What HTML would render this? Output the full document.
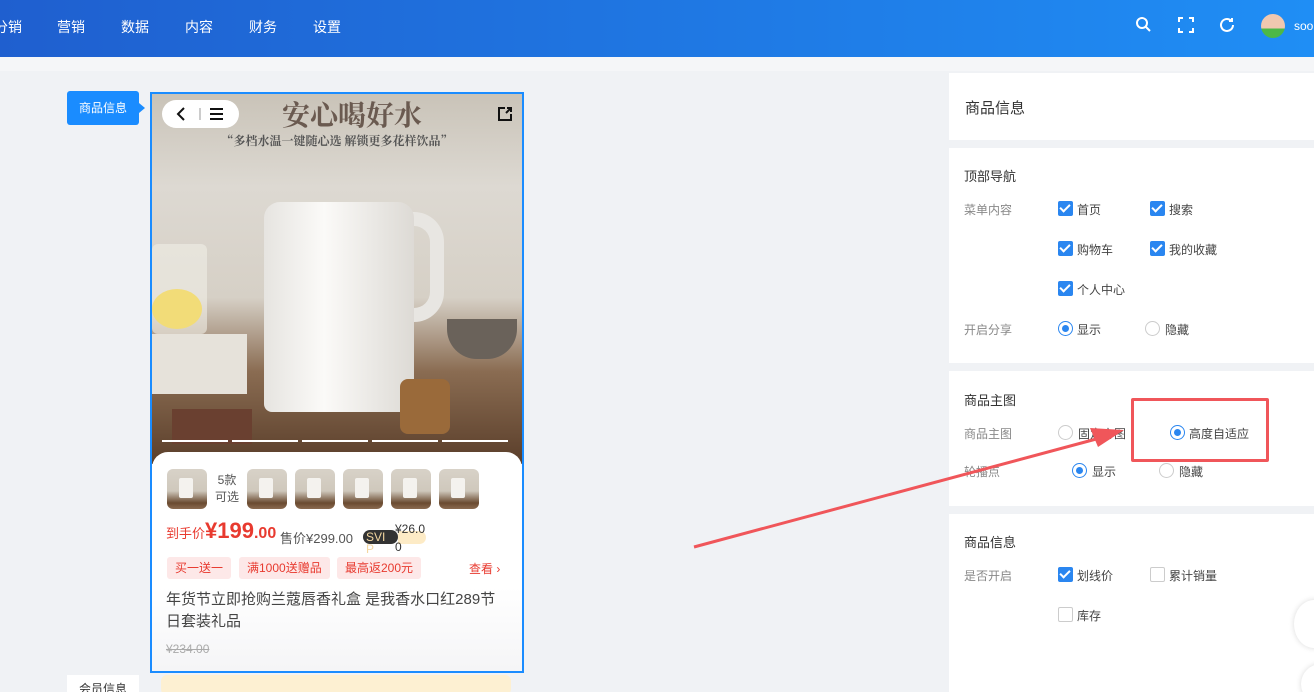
<!DOCTYPE html>
<html><head><meta charset="utf-8"><style>
*{margin:0;padding:0;box-sizing:border-box}
html,body{width:1314px;height:692px;overflow:hidden}
body{background:#f0f2f5;font-family:"Liberation Sans","Noto Sans CJK SC",sans-serif;position:relative;color:#333}
.hdr{position:absolute;left:0;top:0;width:1314px;height:57px;background:linear-gradient(90deg,#1f5fcf,#1f8ef5)}
.hdr span{position:absolute;top:17px;color:#fff;font-size:14px}
.sub{position:absolute;top:57px;left:0;width:1314px;height:14px;background:#f5f6f8}
.abs{position:absolute}
.sec{position:absolute;left:949px;width:365px;background:#fff}
.t{position:absolute;font-size:13px;color:#333}
.l{position:absolute;font-size:12px;color:#888}
.o{position:absolute;font-size:12px;color:#444}
.cb{position:absolute;width:15px;height:15px;border-radius:2px;background:#2a86f0}
.cb:after{content:"";position:absolute;left:4px;top:1px;width:4px;height:8px;border:solid #fff;border-width:0 2px 2px 0;transform:rotate(45deg)}
.cbe{position:absolute;width:15px;height:15px;border-radius:2px;border:1px solid #ccc;background:#fff}
.rd{position:absolute;width:15px;height:15px;border-radius:50%;border:1px solid #2a86f0;background:#fff}
.rd:after{content:"";position:absolute;left:3px;top:3px;width:7px;height:7px;border-radius:50%;background:#2a86f0}
.rde{position:absolute;width:15px;height:15px;border-radius:50%;border:1px solid #ccc;background:#fff}
.th{position:absolute;top:469px;width:40px;height:40px;border-radius:6px;background:linear-gradient(180deg,#d8d2c8 0,#cfc8bc 55%,#6a4a30 85%,#8a6a50 100%)}
.th:after{content:"";position:absolute;left:12px;top:9px;width:14px;height:20px;background:#f4f2ee;border-radius:2px}
.tag{position:absolute;top:557px;height:22px;background:#fde8e8;color:#e83a2f;font-size:12px;line-height:22px;padding:0 8px;border-radius:3px}
</style></head><body>
<div class="hdr">
<span style="left:-6px">分销</span><span style="left:57px">营销</span><span style="left:121px">数据</span><span style="left:185px">内容</span><span style="left:249px">财务</span><span style="left:313px">设置</span>
<svg class="abs" style="left:1135px;top:16px" width="18" height="18" viewBox="0 0 18 18" fill="none" stroke="#fff" stroke-width="2"><circle cx="7" cy="7" r="5"/><path d="M11 11l4 4"/></svg>
<svg class="abs" style="left:1177px;top:16px" width="18" height="18" viewBox="0 0 18 18" fill="none" stroke="#fff" stroke-width="2"><path d="M2 6V2h4M12 2h4v4M16 12v4h-4M6 16H2v-4"/></svg>
<svg class="abs" style="left:1218px;top:16px" width="18" height="18" viewBox="0 0 18 18" fill="none" stroke="#fff" stroke-width="2"><path d="M15 9a6 6 0 1 1-2-4.5M14 2v3h-3"/></svg>
<div class="abs" style="left:1261px;top:14px;width:24px;height:24px;border-radius:50%;background:linear-gradient(#f0c8b0 0,#f0c8b0 60%,#4cb848 60%)"></div>
<span style="left:1294px;font-size:12px;top:19px">soo</span>
</div>
<div class="sub"></div>

<div class="abs" style="left:67px;top:91px;width:72px;height:34px;background:#1a8cff;border-radius:3px;color:#fff;font-size:12px;line-height:34px;text-align:center">商品信息</div>
<div class="abs" style="left:139px;top:103px;border-left:6px solid #1a8cff;border-top:5px solid transparent;border-bottom:5px solid transparent"></div>

<div class="abs" style="left:150px;top:92px;width:374px;height:581px;border:2px solid #1a8cff;background:#f7f7f8;overflow:hidden">
 <div class="abs" style="left:0;top:0;width:370px;height:370px;background:linear-gradient(180deg,#c9c3b8 0,#ddd9d2 25%,#d6d0c6 55%,#8a6c52 75%,#5a3e2a 100%)"></div>
 <div class="abs" style="left:230px;top:118px;width:62px;height:110px;border:14px solid #e8e6e2;border-left:none;border-radius:0 30px 30px 0"></div>
 <div class="abs" style="left:112px;top:108px;width:150px;height:210px;background:linear-gradient(90deg,#e6e4e0,#fbfaf8 40%,#dddad5);border-radius:16px 16px 8px 8px"></div>
 <div class="abs" style="left:0;top:150px;width:55px;height:90px;border-radius:6px;background:rgba(240,238,230,.6)"></div>
 <div class="abs" style="left:0;top:195px;width:50px;height:40px;border-radius:50%;background:#f2dc78"></div>
 <div class="abs" style="left:0;top:240px;width:95px;height:60px;background:#e6e2da"></div>
 <div class="abs" style="left:295px;top:225px;width:70px;height:40px;border-radius:0 0 30px 30px;background:#6a625a"></div>
 <div class="abs" style="left:248px;top:285px;width:50px;height:55px;border-radius:8px;background:#9a6a3a"></div>
 <div class="abs" style="left:20px;top:315px;width:80px;height:35px;background:#6a4030"></div>
 <div class="abs" style="left:0;top:0;width:370px;font-family:'Noto Serif CJK SC',serif;font-size:28px;font-weight:bold;color:#6a5a50;text-align:center;padding-left:30px">安心喝好水</div>
 <div class="abs" style="left:0;top:38px;width:370px;font-family:'Noto Serif CJK SC',serif;font-size:12px;font-weight:bold;color:#555;text-align:center">“多档水温一键随心选 解锁更多花样饮品”</div>
 <div class="abs" style="left:10px;top:6px;width:77px;height:28px;background:#fff;border-radius:14px"></div>
 <svg class="abs" style="left:22px;top:12px" width="60" height="16"><path d="M10 2L4 8l6 6" fill="none" stroke="#111" stroke-width="2"/><path d="M26 2v12" stroke="#999"/><path d="M36 3h13M36 8h13M36 13h13" stroke="#111" stroke-width="2"/></svg>
 <svg class="abs" style="left:345px;top:12px" width="16" height="16" fill="none" stroke="#111" stroke-width="2"><path d="M8 2H2v12h12V8M9 7l5-5M10 2h4v4"/></svg>
 <div class="abs" style="left:10px;top:346px;width:350px;height:2px;background:repeating-linear-gradient(90deg,#fff 0 66px,transparent 66px 70px)"></div>
 <div class="abs" style="left:0;top:358px;width:370px;height:225px;background:linear-gradient(#fff 60%,#f4f4f6);border-radius:16px 16px 0 0"></div>
</div>
<div class="th" style="left:167px"></div>
<div class="abs" style="left:212px;top:472px;font-size:12px;color:#555;line-height:17px;text-align:center;width:30px">5款<br>可选</div>
<div class="th" style="left:247px"></div><div class="th" style="left:295px"></div><div class="th" style="left:343px"></div><div class="th" style="left:391px"></div><div class="th" style="left:439px"></div>
<div class="abs" style="left:166px;top:518px;color:#e83a2f;font-size:13px;white-space:nowrap">到手价<span style="font-size:22px;font-weight:bold">¥199</span><span style="font-size:16px;font-weight:bold">.00</span></div>
<div class="abs" style="left:280px;top:528px;font-size:13px;color:#555">售价¥299.00</div>
<div class="abs" style="left:363px;top:530px;width:35px;height:14px;background:#333;border-radius:7px;color:#f4d7a0;font-size:12px;line-height:14px;padding-left:3px">SVI</div>
<div class="abs" style="left:398px;top:531px;width:28px;height:13px;background:#fdebc6;border-radius:0 7px 7px 0"></div>
<div class="abs" style="left:366px;top:542px;font-size:12px;color:#f4d7a0">P</div>
<div class="abs" style="left:395px;top:520px;font-size:12px;color:#333;line-height:18px;width:34px">¥26.0<br>0</div>
<div class="tag" style="left:167px">买一送一</div><div class="tag" style="left:239px">满1000送赠品</div><div class="tag" style="left:337px">最高返200元</div>
<div class="abs" style="left:469px;top:560px;font-size:12px;color:#e83a2f">查看 ›</div>
<div class="abs" style="left:166px;top:589px;width:340px;font-size:15px;color:#444;line-height:22px">年货节立即抢购兰蔻唇香礼盒 是我香水口红289节日套装礼品</div>
<div class="abs" style="left:166px;top:642px;font-size:12px;color:#aaa;text-decoration:line-through">¥234.00</div>
<div class="abs" style="left:67px;top:675px;width:72px;height:20px;background:#fff;font-size:12px;text-align:center;line-height:28px;color:#333">会员信息</div>
<div class="abs" style="left:161px;top:675px;width:350px;height:20px;background:#fdf0d2;border-radius:6px"></div>

<div class="sec" style="top:73px;height:67px"><div class="t" style="left:16px;top:24px;font-size:15px">商品信息</div></div>
<div class="sec" style="top:148px;height:215px">
 <div class="t" style="left:15px;top:18px">顶部导航</div>
 <div class="l" style="left:15px;top:53px">菜单内容</div>
 <div class="cb" style="left:109px;top:53px"></div><div class="o" style="left:128px;top:53px">首页</div>
 <div class="cb" style="left:201px;top:53px"></div><div class="o" style="left:220px;top:53px">搜索</div>
 <div class="cb" style="left:109px;top:93px"></div><div class="o" style="left:128px;top:93px">购物车</div>
 <div class="cb" style="left:201px;top:93px"></div><div class="o" style="left:220px;top:93px">我的收藏</div>
 <div class="cb" style="left:109px;top:133px"></div><div class="o" style="left:128px;top:133px">个人中心</div>
 <div class="l" style="left:15px;top:173px">开启分享</div>
 <div class="rd" style="left:109px;top:173px"></div><div class="o" style="left:128px;top:173px">显示</div>
 <div class="rde" style="left:196px;top:173px"></div><div class="o" style="left:216px;top:173px">隐藏</div>
</div>
<div class="sec" style="top:371px;height:135px">
 <div class="t" style="left:15px;top:19px">商品主图</div>
 <div class="l" style="left:15px;top:54px">商品主图</div>
 <div class="rde" style="left:109px;top:54px"></div><div class="o" style="left:129px;top:54px">固定方图</div>
 <div class="rd" style="left:221px;top:54px"></div><div class="o" style="left:240px;top:54px">高度自适应</div>
 <div class="l" style="left:15px;top:92px">轮播点</div>
 <div class="rd" style="left:123px;top:92px"></div><div class="o" style="left:143px;top:92px">显示</div>
 <div class="rde" style="left:210px;top:92px"></div><div class="o" style="left:230px;top:92px">隐藏</div>
</div>
<div class="sec" style="top:514px;height:178px">
 <div class="t" style="left:15px;top:18px">商品信息</div>
 <div class="l" style="left:15px;top:53px">是否开启</div>
 <div class="cb" style="left:109px;top:53px"></div><div class="o" style="left:128px;top:53px">划线价</div>
 <div class="cbe" style="left:201px;top:53px"></div><div class="o" style="left:220px;top:53px">累计销量</div>
 <div class="cbe" style="left:109px;top:93px"></div><div class="o" style="left:128px;top:93px">库存</div>
 <div class="abs" style="left:345px;top:86px;width:40px;height:48px;border-radius:50%;background:#fff;box-shadow:0 0 6px rgba(0,0,0,.15)"></div>
 <div class="abs" style="left:352px;top:150px;width:40px;height:40px;border-radius:50%;background:#fff;box-shadow:0 0 6px rgba(0,0,0,.15)"></div>
</div>

<div class="abs" style="left:1131px;top:398px;width:138px;height:64px;border:3px solid #f0565a;border-radius:2px"></div>
<svg class="abs" style="left:0;top:0" width="1314" height="692"><path d="M694 547L1100 438" stroke="#f0565a" stroke-width="3"/><path d="M1124 430L1090 428L1098 447Z" fill="#f0565a"/></svg>
</body></html>
